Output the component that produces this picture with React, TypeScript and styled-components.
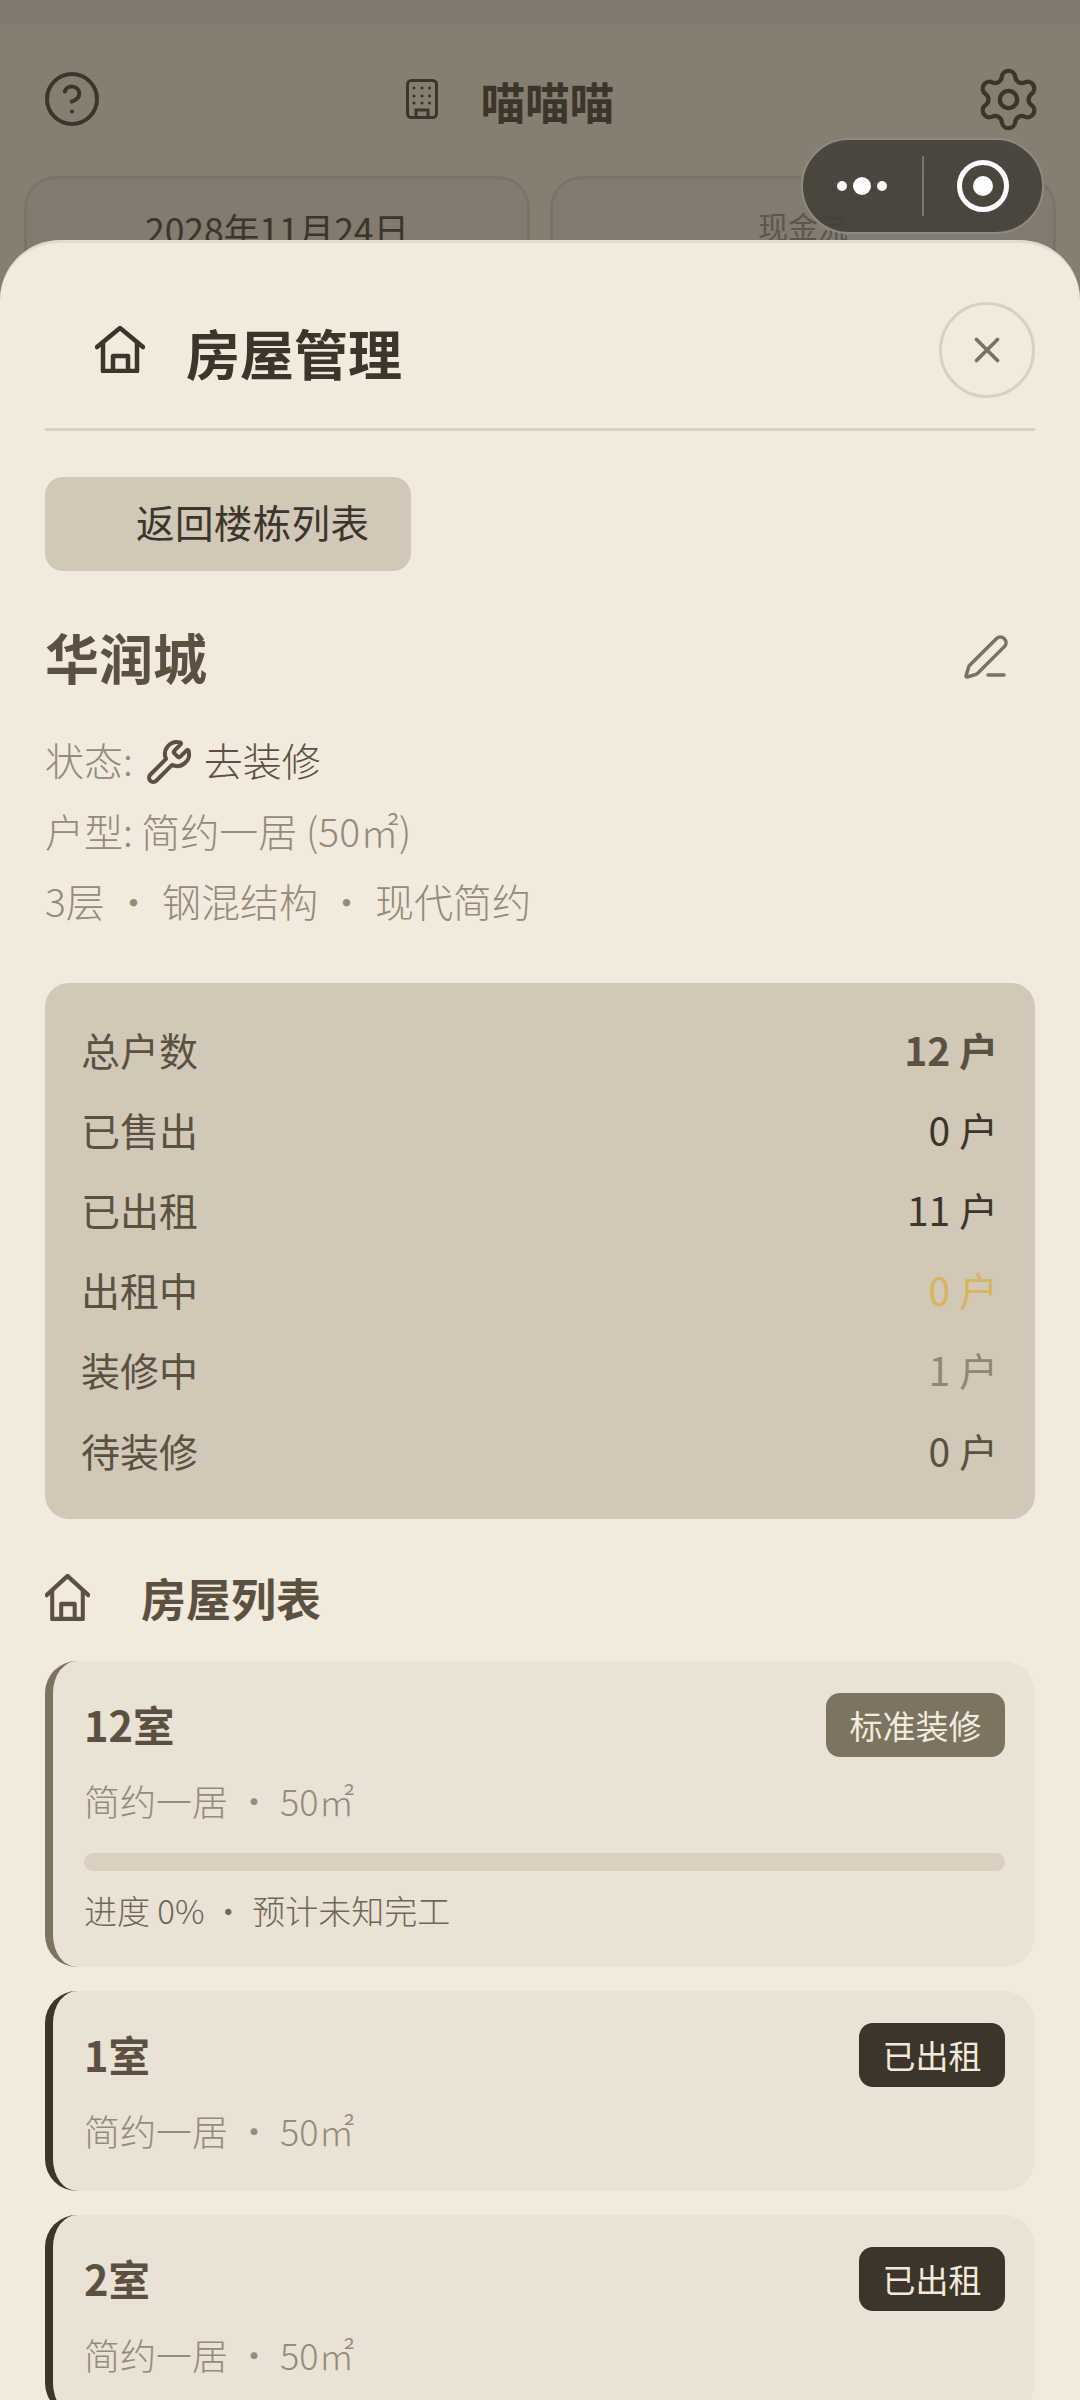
import { CircleHelp, PenLine, Settings, Wrench, X } from 'lucide-react';
import styled, { createGlobalStyle } from 'styled-components';

const GlobalStyle = createGlobalStyle`
  html, body {
    margin: 0;
    padding: 0;
    background: #857f72;
  }
  * {
    box-sizing: border-box;
  }
  body {
    font-family: 'Noto Sans CJK SC', 'Noto Sans', sans-serif;
  }
`;

const Page = styled.div`
  position: relative;
  width: 1080px;
  height: 2400px;
  overflow: hidden;
  background: #857f72;
`;

const StatusBar = styled.div`
  height: 24px;
  background: #807a6e;
`;

const TopBar = styled.div`
  display: flex;
  align-items: center;
  justify-content: space-between;
  height: 150px;
  padding: 0 37px 0 42px;
  color: #3d342a;
`;

const TopTitle = styled.div`
  display: flex;
  align-items: center;
  gap: 43px;
  margin-right: 56px;
  font-size: 44.5px;
  font-weight: 700;
`;

const TopTitleText = styled.span`
  padding-top: 2px;
`;

const Summary = styled.div`
  display: grid;
  grid-template-columns: 506px 506px;
  gap: 20px;
  padding: 2px 24px 0;
`;

const SummaryCard = styled.div<{ $faded?: boolean }>`
  height: 200px;
  padding-top: 24px;
  border: 3px solid #7a7468;
  border-radius: 32px;
  background: #827b6f;
  text-align: center;
  font-size: ${(p) => (p.$faded ? '30px' : '35.5px')};
  color: ${(p) => (p.$faded ? '#5d564b' : '#3d342a')};
`;

const Capsule = styled.div`
  position: absolute;
  top: 138px;
  left: 801px;
  display: flex;
  align-items: center;
  width: 243px;
  height: 96px;
  border: 2px solid #8f8a7f;
  border-radius: 48px;
  background: rgba(67, 62, 54, 0.87);
`;

const CapsuleSide = styled.div`
  display: flex;
  flex: 1;
  align-items: center;
  justify-content: center;
  gap: 6px;
`;

const CapsuleLine = styled.div`
  width: 2px;
  height: 60px;
  background: #7b766b;
`;

const Dot = styled.span<{ $big?: boolean }>`
  width: ${(p) => (p.$big ? '18px' : '10px')};
  height: ${(p) => (p.$big ? '18px' : '10px')};
  border-radius: 50%;
  background: #fff;
`;

const Ring = styled.div`
  display: flex;
  align-items: center;
  justify-content: center;
  width: 52px;
  height: 52px;
  border: 5px solid #fff;
  border-radius: 50%;
`;

const RingDot = styled.div`
  width: 20px;
  height: 20px;
  border-radius: 50%;
  background: #fff;
`;

const Sheet = styled.div`
  position: absolute;
  top: 240px;
  left: 0;
  width: 1080px;
  height: 2160px;
  padding: 0 45px;
  border-top: 3px solid #e2dacb;
  border-radius: 60px 60px 0 0;
  background: #f2eadd;
`;

const SheetHeader = styled.div`
  display: flex;
  align-items: center;
  height: 188px;
  padding: 28px 0 0 50px;
  border-bottom: 3px solid #d9d0c0;
  color: #3d342a;
`;

const SheetTitle = styled.div`
  flex: 1;
  margin: 6px 0 0 41px;
  font-size: 54px;
  font-weight: 700;
`;

const CloseButton = styled.div`
  display: flex;
  align-items: center;
  justify-content: center;
  width: 96px;
  height: 96px;
  border: 3px solid #d9d0c0;
  border-radius: 50%;
  color: #7a7161;
`;

const BackButton = styled.div`
  display: inline-flex;
  align-items: center;
  width: 366px;
  height: 94px;
  margin-top: 46px;
  padding: 0 0 7px 91px;
  border-radius: 18px;
  background: #d1c8b8;
  font-size: 38.5px;
  letter-spacing: 0.4px;
  color: #3d342a;
`;

const HouseRow = styled.div`
  display: flex;
  align-items: center;
  justify-content: space-between;
  margin-top: 46px;
  padding-right: 25px;
  color: #7a7161;
`;

const HouseName = styled.div`
  font-size: 54px;
  font-weight: 700;
  line-height: 80px;
  color: #5c5141;
`;

const InfoLine = styled.div<{ $first?: boolean }>`
  display: flex;
  align-items: center;
  height: 70.5px;
  margin-top: ${(p) => (p.$first ? '27px' : '0')};
  font-size: 39px;
  font-weight: 300;
  color: #948b79;
  white-space: pre;
`;

const StatusValue = styled.span`
  display: inline-flex;
  align-items: center;
  gap: 11px;
  margin-left: 12px;
  color: #5c5141;
`;

const StatusIcon = styled(Wrench)`
  margin-top: 6px;
`;

const Sep = styled.span`
  margin: 0 9px;
`;

const StatsPanel = styled.div`
  margin-top: 47px;
  padding: 26px 37px 29px 36px;
  border-radius: 24px;
  background: #d1c8b8;
`;

const StatRow = styled.div`
  display: flex;
  align-items: center;
  justify-content: space-between;
  height: 80.2px;
  font-size: 39px;
  color: #5c5141;
`;

const StatValue = styled.span<{ $color?: string; $bold?: boolean }>`
  color: ${(p) => p.$color || '#3d342a'};
  font-weight: ${(p) => (p.$bold ? 700 : 400)};
`;

const ListHeading = styled.div`
  display: flex;
  align-items: center;
  gap: 51px;
  margin-top: 47px;
  margin-bottom: 31px;
  font-size: 45px;
  font-weight: 700;
  line-height: 64px;
  color: #5c5141;
`;

const RoomCard = styled.div<{ $accent: string }>`
  margin-bottom: 24.4px;
  padding: 32px 30px 34px 31px;
  border-left: 8px solid ${(p) => p.$accent};
  border-radius: 32px;
  background: #eae2d5;
`;

const RoomTop = styled.div`
  display: flex;
  align-items: center;
  justify-content: space-between;
  height: 64px;
`;

const RoomName = styled.div`
  margin-top: -2px;
  font-size: 41.5px;
  font-weight: 700;
  color: #5c5141;
`;

const RoomBadge = styled.div<{ $bg: string }>`
  display: flex;
  align-items: center;
  height: 64px;
  padding: 0 23.5px;
  border-radius: 14px;
  background: ${(p) => p.$bg};
  font-size: 33px;
  color: #f2eadd;
`;

const RoomMeta = styled.div`
  margin-top: 16px;
  font-size: 36px;
  font-weight: 300;
  line-height: 54px;
  color: #948b79;
`;

const ProgressTrack = styled.div`
  height: 18px;
  margin-top: 26px;
  border-radius: 9px;
  background: #d9d0c0;
`;

const ProgressText = styled.div`
  margin-top: 16px;
  font-size: 33px;
  font-weight: 300;
  line-height: 46px;
  color: #6f6656;
`;

const HomeIcon = ({ width, height }: { width: number; height: number }) => (
  <svg
    width={width}
    height={height}
    viewBox="0 0 50 47"
    preserveAspectRatio="none"
    fill="none"
    stroke="currentColor"
    strokeWidth="4.5"
  >
    <path d="M2 21 25 2l23 19" strokeLinecap="round" strokeLinejoin="round" />
    <path d="M8 17v28h34V17" strokeLinejoin="round" />
    <path d="M18 45V30h15v15" strokeLinejoin="round" />
  </svg>
);

const OfficeIcon = () => (
  <svg width="32" height="40" viewBox="0 0 32 40" fill="none" stroke="currentColor" strokeWidth="3">
    <rect x="1.5" y="1.5" width="29" height="37" rx="4" />
    <path d="M10 38v-7h12v7" />
    <g fill="currentColor" stroke="none">
      {[9, 17, 24].map((y) =>
        [8, 16, 23.5].map((x) => <circle key={`${x}-${y}`} cx={x} cy={y} r="1.6" />)
      )}
    </g>
  </svg>
);

const stats = [
  { label: '总户数', value: '12 户', bold: true, color: '#5c5141' },
  { label: '已售出', value: '0 户' },
  { label: '已出租', value: '11 户' },
  { label: '出租中', value: '0 户', color: '#d9b45c' },
  { label: '装修中', value: '1 户', color: '#8f8675' },
  { label: '待装修', value: '0 户', color: '#5c5141' },
];

const rooms = [
  { name: '12室', badge: '标准装修', accent: '#7c7361', progress: '进度 0% ・ 预计未知完工' },
  { name: '1室', badge: '已出租', accent: '#3d342a' },
  { name: '2室', badge: '已出租', accent: '#3d342a' },
];

export default function App() {
  return (
    <Page>
      <GlobalStyle />
      <StatusBar />
      <TopBar>
        <CircleHelp size={60} strokeWidth={1.6} />
        <TopTitle>
          <OfficeIcon />
          <TopTitleText>喵喵喵</TopTitleText>
        </TopTitle>
        <Settings size={69} strokeWidth={1.5} />
      </TopBar>
      <Summary>
        <SummaryCard>2028年11月24日</SummaryCard>
        <SummaryCard $faded>现金流</SummaryCard>
      </Summary>
      <Capsule>
        <CapsuleSide>
          <Dot />
          <Dot $big />
          <Dot />
        </CapsuleSide>
        <CapsuleLine />
        <CapsuleSide>
          <Ring>
            <RingDot />
          </Ring>
        </CapsuleSide>
      </Capsule>
      <Sheet>
        <SheetHeader>
          <HomeIcon width={50} height={47} />
          <SheetTitle>房屋管理</SheetTitle>
          <CloseButton>
            <X size={42} strokeWidth={2.1} />
          </CloseButton>
        </SheetHeader>
        <BackButton>返回楼栋列表</BackButton>
        <HouseRow>
          <HouseName>华润城</HouseName>
          <PenLine size={48} strokeWidth={1.75} />
        </HouseRow>
        <InfoLine $first>
          状态:
          <StatusValue>
            <StatusIcon size={48} strokeWidth={2} />
            去装修
          </StatusValue>
        </InfoLine>
        <InfoLine>户型: 简约一居 (50㎡)</InfoLine>
        <InfoLine>
          3层<Sep>・</Sep>钢混结构<Sep>・</Sep>现代简约
        </InfoLine>
        <StatsPanel>
          {stats.map((s) => (
            <StatRow key={s.label}>
              {s.label}
              <StatValue $bold={s.bold} $color={s.color}>
                {s.value}
              </StatValue>
            </StatRow>
          ))}
        </StatsPanel>
        <ListHeading>
          <HomeIcon width={45} height={47} />
          房屋列表
        </ListHeading>
        {rooms.map((r) => (
          <RoomCard key={r.name} $accent={r.accent}>
            <RoomTop>
              <RoomName>{r.name}</RoomName>
              <RoomBadge $bg={r.accent}>{r.badge}</RoomBadge>
            </RoomTop>
            <RoomMeta>简约一居 ・ 50㎡</RoomMeta>
            {r.progress && (
              <>
                <ProgressTrack />
                <ProgressText>{r.progress}</ProgressText>
              </>
            )}
          </RoomCard>
        ))}
      </Sheet>
    </Page>
  );
}
